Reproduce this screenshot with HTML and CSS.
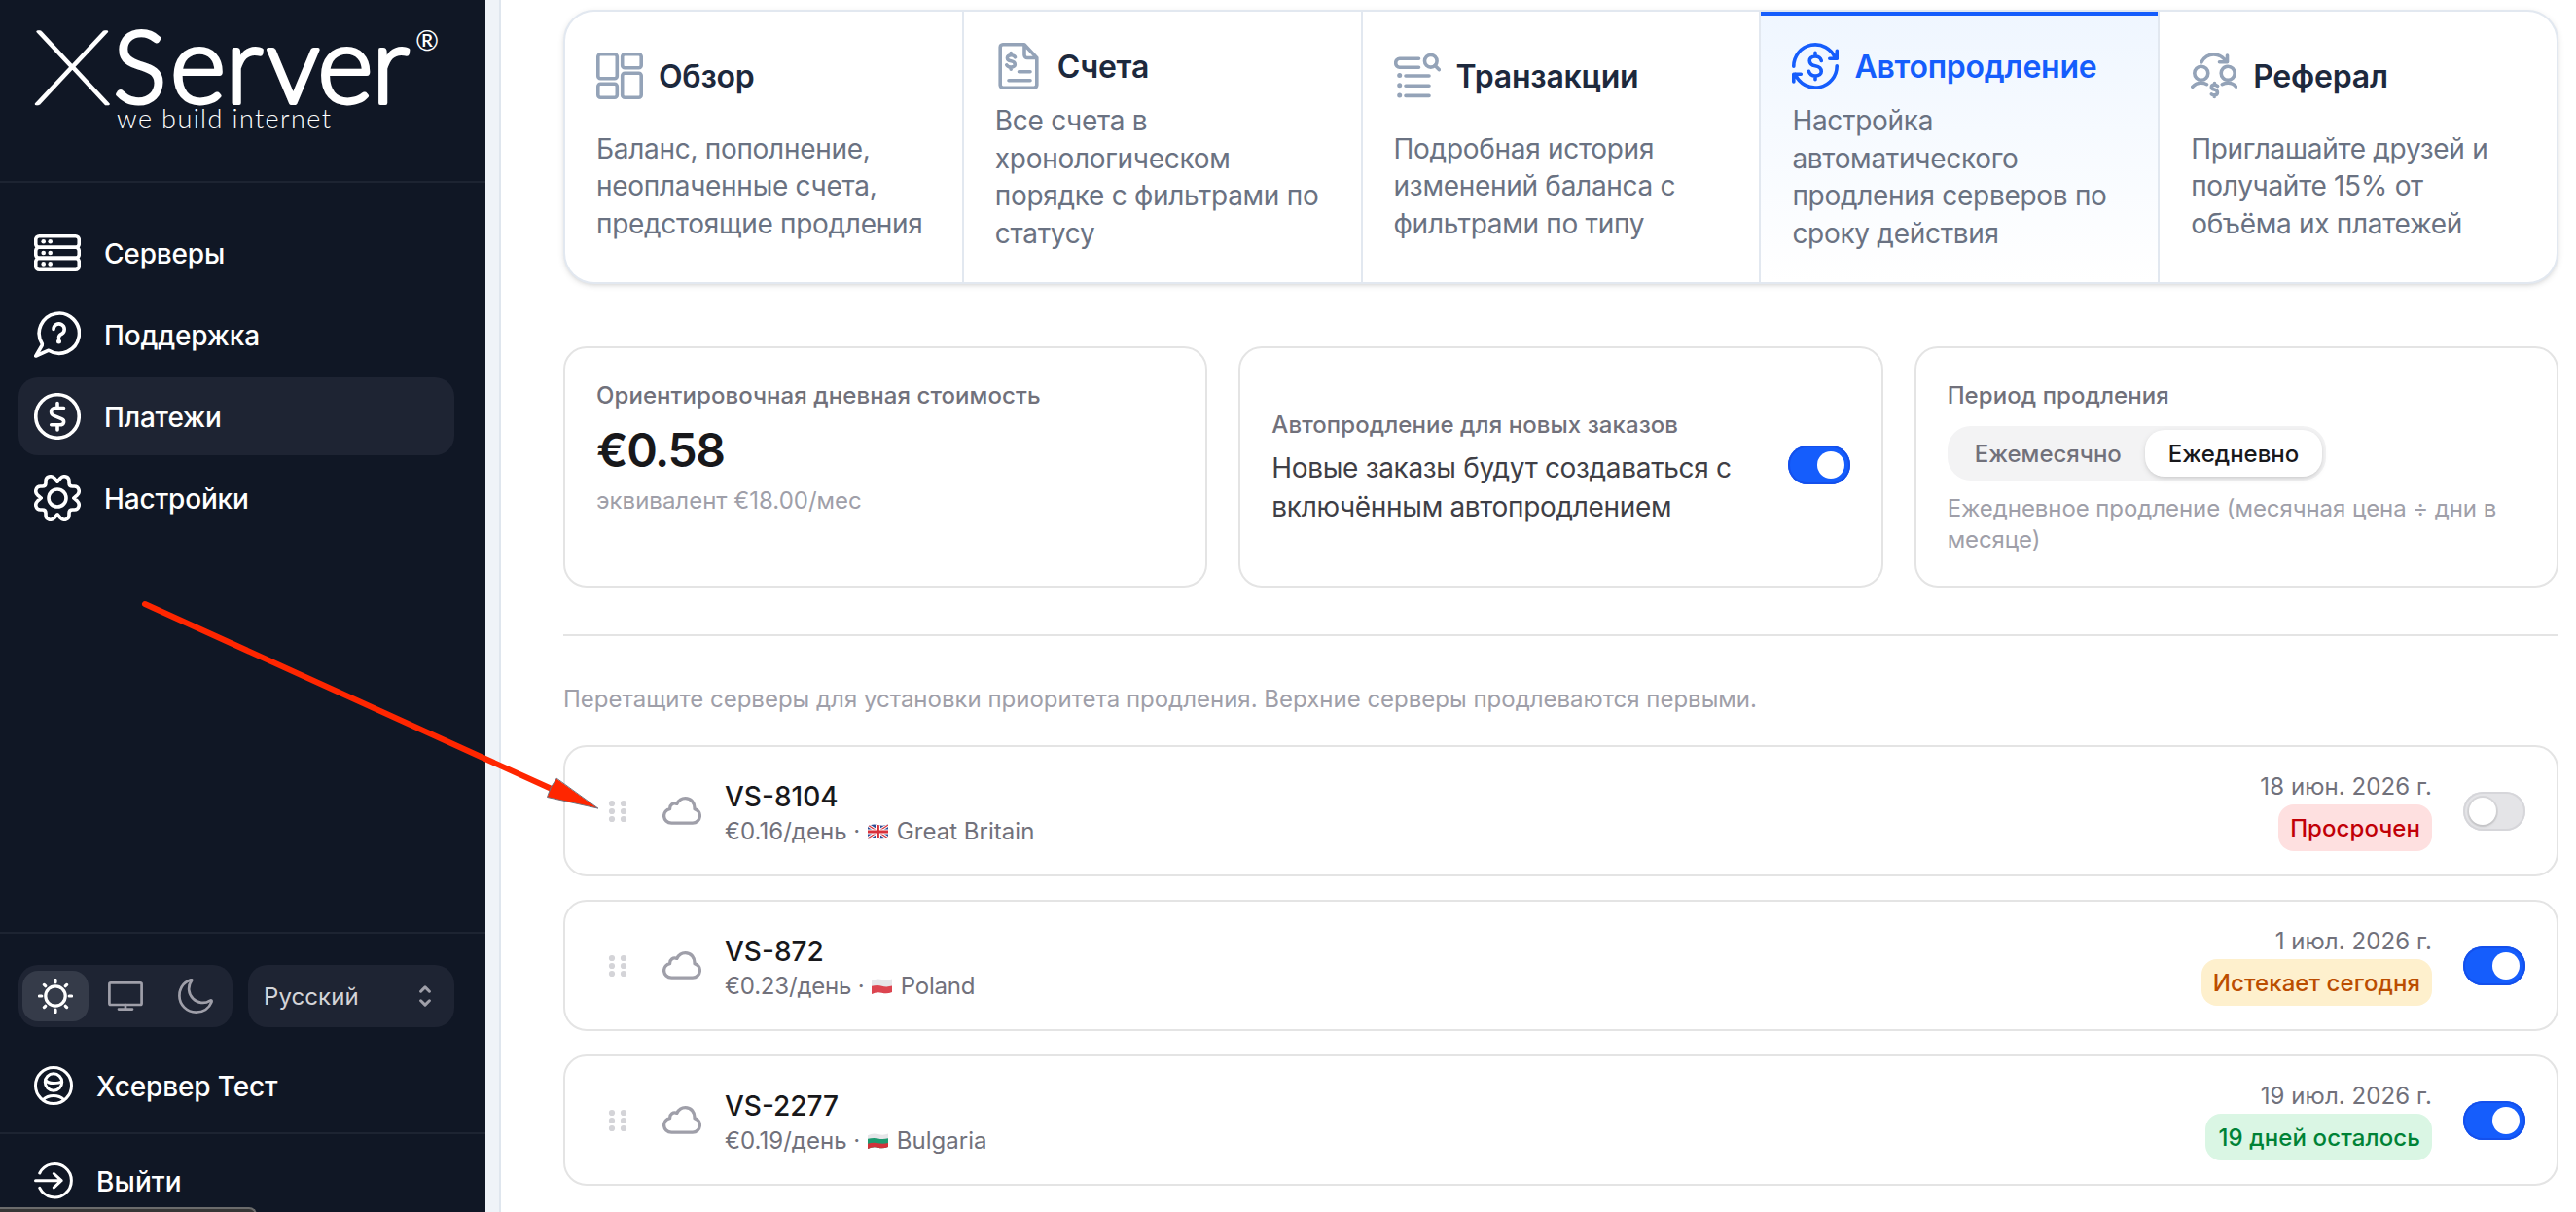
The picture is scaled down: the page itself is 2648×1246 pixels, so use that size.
FILE: index.html
```html
<!DOCTYPE html>
<html lang="ru">
<head>
<meta charset="utf-8">
<title>XServer — Автопродление</title>
<link rel="stylesheet" href="styles.css">
</head>
<body>
<svg class="defs" width="0" height="0" aria-hidden="true">
  <symbol id="cloud" viewBox="0 0 40 40"><path d="M9.3 32.1C5 32.1 1.6 28.8 1.6 24.8C1.6 21.2 4.2 18.3 7.6 17.6C7.4 13.3 11 10.8 14.8 12.4C16.6 8.8 20 6.7 23.5 6.7C29.5 6.7 33.3 11.5 33 17.6C36 18.6 38.4 21.4 38.4 24.8C38.4 28.9 35 32.1 31 32.1Z"/></symbol>
  <symbol id="grip" viewBox="0 0 20 24"><circle cx="4" cy="4" r="3.1"/><circle cx="16" cy="4" r="3.1"/><circle cx="4" cy="12" r="3.1"/><circle cx="16" cy="12" r="3.1"/><circle cx="4" cy="20" r="3.1"/><circle cx="16" cy="20" r="3.1"/></symbol>
  <clipPath id="wave"><path d="M2 2.2Q7 -.6 12.500 1T23 .6V14Q18 16 12.500 14.700T2 16Z"/></clipPath>
</svg>

<aside class="sidebar">
  <header class="brand">
    <svg class="logo" width="430" height="120" viewBox="0 0 430 120" role="img" aria-label="XServer">
      <text class="logo-x" transform="translate(12.500 86) scale(1.27 1)">X</text>
      <text class="logo-name" y="85"><tspan class="cap" x="95.500">S</tspan><tspan x="153.700 210.600 252.700 305.300 361">erver</tspan></text>
      <text class="logo-reg" x="406" y="31">®</text>
      <text class="logo-tag" x="99" y="111" textLength="220">we build internet</text>
    </svg>
  </header>

  <nav class="nav">
    <a class="nav-item">
      <svg class="icon48" viewBox="0 0 48 48"><rect x="1.750" y="6.700" width="44.500" height="11.600" rx="3.600"/><rect x="1.750" y="18.300" width="44.500" height="11.100" rx="3.600"/><rect x="1.750" y="29.400" width="44.500" height="11.900" rx="3.600"/><g class="fill"><circle cx="9.700" cy="12.300" r="2.300"/><circle cx="16.700" cy="12.300" r="2.300"/><circle cx="9.700" cy="24" r="2.300"/><circle cx="16.700" cy="24" r="2.300"/><circle cx="9.700" cy="35.400" r="2.300"/><circle cx="16.700" cy="35.400" r="2.300"/></g></svg>
      <span>Серверы</span>
    </a>
    <a class="nav-item">
      <svg class="icon48" viewBox="0 0 48 48"><path d="M15 40.200A20.600 20.600 0 1 0 8.300 33.500L8.200 35L1.800 46Z"/><path d="M20 18.500a5.600 5.600 0 1 1 8.600 4.700q-3 1.600-3.100 3.600"/><circle class="fill" cx="25.500" cy="31" r="2.500"/></svg>
      <span>Поддержка</span>
    </a>
    <a class="nav-item active">
      <svg class="icon48" viewBox="0 0 48 48"><circle cx="24" cy="24" r="22.250"/><path d="M30.500 15.500h-8.600c-5 0-5.600 6-2 7.600l8.400 3.500c3.600 1.600 3 6.200-2 6.200H17.700M24 10.500v5M24 33v5"/></svg>
      <span>Платежи</span>
    </a>
    <a class="nav-item">
      <svg class="icon48" viewBox="-24 -24 48 48"><path d="M0-16.800L3.200-20.500C6-23.500 12-22.500 12-17.500V-15.500Q12-12 15.500-12H17.500C22.500-12 23.500-6 20.500-3.200L16.800 0L20.500 3.200C23.500 6 22.500 12 17.500 12H15.500Q12 12 12 15.500V17.500C12 22.500 6 23.500 3.200 20.500L0 16.800L-3.200 20.500C-6 23.500-12 22.500-12 17.500V15.500Q-12 12-15.500 12H-17.500C-22.500 12-23.500 6-20.500 3.200L-16.800 0L-20.500-3.200C-23.500-6-22.500-12-17.500-12H-15.500Q-12-12-12-15.500V-17.500C-12-22.500-6-23.500-3.200-20.500Z"/><circle r="9"/></svg>
      <span>Настройки</span>
    </a>
  </nav>

  <footer class="side-foot">
    <div class="controls">
      <div class="themes">
        <span class="theme on"><svg width="36" height="36" viewBox="0 0 36 36"><circle cx="18" cy="18" r="10.200"/><path d="M18 1.500v2.300M18 32.200v2.300M1.500 18h2.300M32.200 18h2.300M6.400 6.400l1.300 1.300M28.300 28.300l1.300 1.300M6.400 29.600l1.300-1.300M28.300 7.700l1.300-1.300"/></svg></span>
        <span class="theme"><svg width="36" height="36" viewBox="0 0 36 36"><rect x="1.400" y="4.400" width="33.200" height="22.600" rx="1.500"/><path d="M18 27v4.500M11 31.600h14"/></svg></span>
        <span class="theme"><svg width="36" height="36" viewBox="0 0 36 36"><path d="M14 2.200C9.500 8 10.600 16 15.500 20.700C20 25.300 27.500 26.300 32.600 22.800C34.300 21.800 35 22.400 34.400 24.200C32 30.500 26 34.600 18.500 34.600C9 34.600 1.400 27 1.400 17.800C1.400 10.500 5.500 4.500 11.800 1.700C13.800 .900 14.800 1.200 14 2.200Z"/></svg></span>
      </div>
      <div class="lang">
        <span>Русский</span>
        <svg width="12" height="22" viewBox="0 0 12 22"><path d="M1.600 6.200L6 1.900l4.400 4.300M1.600 15.800L6 20.100l4.400-4.300"/></svg>
      </div>
    </div>
    <a class="foot-item user">
      <svg width="40" height="40" viewBox="0 0 40 40"><circle cx="20" cy="20" r="18.500"/><circle cx="20" cy="16.500" r="8.700"/><path d="M11.800 14.500Q14 17.500 20 17.500T28.400 16M9.300 34.600Q13.500 30.600 20 30.600T30.700 34.600"/></svg>
      <span>Хсервер Тест</span>
    </a>
    <a class="foot-item logout">
      <svg width="40" height="40" viewBox="0 0 40 40"><path d="M5.800 12A17.200 17.200 0 1 1 5.800 27.400M1.500 19.700H28M20.400 12.500l7.700 7.200-7.700 7.200"/></svg>
      <span>Выйти</span>
    </a>
  </footer>
  <div class="status"></div>
</aside>

<main class="main">
  <section class="tabs">
    <a class="tab">
      <div class="tab-head"><svg class="icon48" viewBox="0 0 48 48"><rect x="1.800" y="1.800" width="19.500" height="25" rx="2.500"/><rect x="26.700" y="1.800" width="19.500" height="14" rx="2.500"/><rect x="1.800" y="32.200" width="19.500" height="14" rx="2.500"/><rect x="26.700" y="21.200" width="19.500" height="25" rx="2.500"/></svg><h3>Обзор</h3></div>
      <p>Баланс, пополнение, неоплаченные счета, предстоящие продления</p>
    </a>
    <a class="tab">
      <div class="tab-head"><svg class="icon48" viewBox="0 0 48 48"><path d="M30 1.800H8A3 3 0 0 0 5.200 4.600V43.400A3 3 0 0 0 8 46.200H40A3 3 0 0 0 42.800 43.400V15.500ZM30 1.800V12.500A3 3 0 0 0 33 15.500H42.800"/><path d="M20.500 14.800q-1.200-2-4.200-2c-5.500 0-4.800 5.300 0 6c5.200.800 5.500 6.200 0 6.200q-3.200 0-4.500-2.200M16.200 10.500v2.300M16.200 25v2.300M24.500 29.800H36M14 38.700H36"/></svg><h3>Счета</h3></div>
      <p>Все счета в хронологическом порядке с фильтрами по статусу</p>
    </a>
    <a class="tab">
      <div class="tab-head"><svg class="icon48" viewBox="0 0 48 48"><path d="M25.500 6.300H6.200A4 4 0 0 0 1.800 10.700A4 4 0 0 0 6.200 15.200H25.500"/><circle cx="37.800" cy="8.800" r="6.300"/><path d="M42.200 13.400l4 4.200M12 24H36M12 34.200H36M12 44.400H36"/><g class="fill"><circle cx="5.700" cy="23.500" r="2.500"/><circle cx="5.700" cy="33.800" r="2.500"/><circle cx="5.700" cy="44" r="2.500"/></g></svg><h3>Транзакции</h3></div>
      <p>Подробная история изменений баланса с фильтрами по типу</p>
    </a>
    <a class="tab current">
      <div class="tab-head"><svg class="icon48" viewBox="0 0 48 48"><path d="M1.800 24.300A22.200 22.200 0 0 1 44.600 15.800M46.300 8.400V16.200H38.800M46.200 23.700A22.200 22.200 0 0 1 3.400 32.200M1.800 40V32.200H9.300"/><path d="M30.300 18.500q-1.300-4.500-6.300-4.500c-8 0-7.500 8.500 0 9.800c8.200 1.400 8.400 10.200 0 10.200q-5.300 0-6.600-4.700M24 10.300v3.700M24 34v3.700"/></svg><h3>Автопродление</h3></div>
      <p>Настройка автоматического продления серверов по сроку действия</p>
    </a>
    <a class="tab">
      <div class="tab-head"><svg class="icon48" viewBox="0 0 48 48"><circle cx="10.800" cy="21.300" r="7"/><circle cx="38.200" cy="21.300" r="7"/><path d="M1.800 35.200Q5.500 31.300 10.800 31.300Q14 31.300 16.500 32.700M32.300 32.700Q34.800 31.300 38.200 31.300Q43.500 31.300 46.500 35.200M11 9.800Q15.500 2 23.500 2Q31.500 2 36.200 9.200M37.500 3V9.700H29.500"/><path d="M27.600 34.500q-1.200-1.300-3.500-1.300c-3.600 0-3.800 4 0 4.900c4.600 1 4.200 5.700.200 5.700q-1.800 0-3-.900M24.500 31.500v1.500M24.300 44v1.500"/></svg><h3>Реферал</h3></div>
      <p>Приглашайте друзей и получайте 15% от объёма их платежей</p>
    </a>
  </section>

  <section class="stats">
    <div class="card">
      <div class="label">Ориентировочная дневная стоимость</div>
      <div class="price">€0.58</div>
      <div class="note">эквивалент €18.00/мес</div>
    </div>
    <div class="card split">
      <div>
        <div class="label">Автопродление для новых заказов</div>
        <div class="text">Новые заказы будут создаваться с включённым автопродлением</div>
      </div>
      <span class="toggle on"></span>
    </div>
    <div class="card period">
      <div class="label">Период продления</div>
      <div class="segment"><span>Ежемесячно</span><span class="picked">Ежедневно</span></div>
      <div class="hint">Ежедневное продление (месячная цена ÷ дни в месяце)</div>
    </div>
  </section>

  <hr class="rule">
  <p class="drag-hint">Перетащите серверы для установки приоритета продления. Верхние серверы продлеваются первыми.</p>

  <section class="servers">
    <article class="server">
      <span class="grip"><svg width="20" height="24"><use href="#grip"/></svg></span>
      <svg class="cloud"><use href="#cloud"/></svg>
      <div class="info">
        <div class="name">VS-8104</div>
        <div class="meta">€0.16/день · <svg class="flag" width="25" height="16" viewBox="0 0 25 16"><g clip-path="url(#wave)"><rect width="25" height="16" fill="#2f4c94"/><path d="M2 1L23 15M23 1L2 15" stroke="#fff" stroke-width="3.200"/><path d="M2 1L23 15M23 1L2 15" stroke="#d9363e" stroke-width="1.200"/><path d="M12.500 0V16M0 8H25" stroke="#fff" stroke-width="5"/><path d="M12.500 0V16M0 8H25" stroke="#d9303a" stroke-width="2.800"/></g></svg> Great Britain</div>
      </div>
      <div class="due"><span>18 июн. 2026 г.</span><b class="pill red">Просрочен</b></div>
      <span class="toggle"></span>
    </article>
    <article class="server">
      <span class="grip"><svg width="20" height="24"><use href="#grip"/></svg></span>
      <svg class="cloud"><use href="#cloud"/></svg>
      <div class="info">
        <div class="name">VS-872</div>
        <div class="meta tight">€0.23/день · <svg class="flag" width="25" height="16" viewBox="0 0 25 16"><g clip-path="url(#wave)"><rect width="25" height="16" fill="#e6e6e9"/><path d="M0 8.500Q7 6 12.500 7.700T25 7V16H0Z" fill="#dc4550"/></g></svg> Poland</div>
      </div>
      <div class="due"><span>1 июл. 2026 г.</span><b class="pill amber">Истекает сегодня</b></div>
      <span class="toggle on"></span>
    </article>
    <article class="server">
      <span class="grip"><svg width="20" height="24"><use href="#grip"/></svg></span>
      <svg class="cloud"><use href="#cloud"/></svg>
      <div class="info">
        <div class="name">VS-2277</div>
        <div class="meta">€0.19/день · <svg class="flag" width="25" height="16" viewBox="0 0 25 16"><g clip-path="url(#wave)"><rect width="25" height="16" fill="#e6e6e9"/><path d="M0 6.500Q7 4 12.500 5.400T25 4.800V16H0Z" fill="#1d9a70"/><path d="M0 11.500Q7 9 12.500 10.200T25 9.600V16H0Z" fill="#d2323a"/></g></svg> Bulgaria</div>
      </div>
      <div class="due"><span>19 июл. 2026 г.</span><b class="pill green">19 дней осталось</b></div>
      <span class="toggle on"></span>
    </article>
  </section>
</main>

<svg class="arrow" width="480" height="226" viewBox="0 0 480 226"><path d="M9 11L427 201" stroke="#ff2600" stroke-width="6" stroke-linecap="round"/><path d="M474.500 221L422.500 209.500L426 200L432 190.500Z" fill="#ff2600"/></svg>
</body>
</html>
```
FILE: styles.css
```css
* { box-sizing: border-box; }

body {
  margin: 0;
  width: 2648px;
  height: 1246px;
  overflow: hidden;
  position: relative;
  display: flex;
  align-items: flex-start;
  background: #eff3f8;
  font-family: Inter, "Noto Sans", sans-serif;
  font-size: 24px;
  line-height: 32px;
  letter-spacing: 0.003em;
  color: #71717b;
}

h3, p { margin: 0; }

.defs { position: absolute; }

svg {
  flex: none;
  fill: none;
  stroke: currentColor;
  stroke-linecap: round;
  stroke-linejoin: round;
}

.icon48 {
  width: 48px;
  height: 48px;
  stroke-width: 3.6;
}

.fill { fill: currentColor; stroke: none; }

/* Sidebar */
.sidebar {
  flex: none;
  width: 499px;
  height: 1254px;
  display: flex;
  flex-direction: column;
  position: relative;
  background: #101725;
  color: #fff;
}

.brand {
  height: 188px;
  padding: 21px 0 0 21px;
  border-bottom: 2px solid #1d2432;
}

.logo {
  display: block;
  overflow: visible;
  font-family: Lato, "Open Sans", sans-serif;
  font-weight: 300;
  letter-spacing: 0;
}

.logo text { fill: #fff; stroke: none; }
.logo .logo-x { font-size: 107px; font-weight: 100; stroke: #fff; stroke-width: 2.7px; }
.logo .logo-name { font-size: 110px; stroke: #fff; stroke-width: 3.8px; }
.logo .cap { font-size: 102px; stroke-width: 4px; }
.logo .logo-reg { font-size: 29px; font-weight: 400; }
.logo .logo-tag { font-size: 27px; }

.nav {
  flex: 1;
  display: flex;
  flex-direction: column;
  gap: 4px;
  padding: 32px 32px 0 19px;
}

.nav-item {
  height: 80px;
  padding: 0 16px;
  display: flex;
  align-items: center;
  gap: 24px;
  border-radius: 20px;
  font-size: 28px;
  font-weight: 500;
  letter-spacing: -0.006em;
}

.nav-item span,
.foot-item span,
.tab-head h3 { padding-top: 2px; }

.lang span { padding-top: 2px; }

.nav-item.active { background: #1e2433; }

.side-foot {
  border-top: 2px solid #1d2432;
  padding-top: 32px;
}

.controls {
  display: flex;
  gap: 16px;
  padding: 0 32px 0 19px;
}

.themes {
  width: 220px;
  height: 64px;
  padding: 6px 4px;
  display: flex;
  gap: 4px;
  border-radius: 20px;
  background: #1e2433;
}

.theme {
  flex: 1;
  display: flex;
  align-items: center;
  justify-content: center;
  border-radius: 16px;
  color: #9f9fa9;
  stroke-width: 2.7;
}

.theme.on { background: #353b49; color: #fff; stroke-width: 3.2; }

.lang {
  flex: 1;
  height: 64px;
  padding: 0 24px 0 16px;
  display: flex;
  align-items: center;
  justify-content: space-between;
  border-radius: 20px;
  background: #1e2433;
  color: #d4d4d8;
}

.lang svg { color: #9f9fa9; stroke-width: 3; }

.foot-item {
  height: 80px;
  padding-left: 35px;
  display: flex;
  align-items: center;
  gap: 24px;
  font-size: 28px;
  font-weight: 500;
  letter-spacing: -0.005em;
  stroke-width: 3;
}

.user { margin: 20px 0 8px; }

.logout {
  height: 90px;
  padding-top: 8px;
  border-top: 2px solid #1d2432;
}

.logout span { letter-spacing: 0.004em; }

/* Browser link preview peeking in at the bottom edge */
.status {
  position: absolute;
  left: 0;
  top: 1241px;
  width: 264px;
  height: 13px;
  border-top: 2px solid #6b6b6b;
  border-right: 2px solid #6b6b6b;
  border-top-right-radius: 8px;
  background: #363636;
}

/* Main panel */
.main {
  flex: 1;
  min-width: 0;
  height: 1246px;
  margin-left: 14px;
  padding: 10px 18px 0 64px;
  border-left: 2px solid #dfe6ee;
  background: #fff;
}

.tabs {
  height: 282px;
  display: grid;
  grid-template-columns: repeat(5, 1fr);
  gap: 2px;
  border: 2px solid #e2e8f0;
  border-radius: 32px;
  overflow: hidden;
  background: #e2e8f0;
  box-shadow: 0 2px 6px rgba(0, 0, 0, 0.1), 0 2px 4px -2px rgba(0, 0, 0, 0.1);
}

.tab {
  min-width: 0;
  padding: 32px;
  display: flex;
  flex-direction: column;
  justify-content: space-around;
  gap: 12px;
  background: #fff;
}

.tab-head {
  display: flex;
  align-items: center;
  gap: 16px;
  color: #94a3b8;
}

.tab h3 {
  font-size: 32px;
  line-height: 40px;
  font-weight: 600;
  letter-spacing: -0.007em;
  color: #1d293d;
}

.tab p {
  padding-top: 1px;
  margin-bottom: -1px;
  font-size: 28px;
  line-height: 38.5px;
  letter-spacing: -0.0105em;
  color: #6a7282;
}

.tab.current {
  background: linear-gradient(#eff6ff, #fff);
  box-shadow: inset 0 4px 0 #155dfc;
}

.tab.current .tab-head,
.tab.current h3 { color: #155dfc; }

.stats {
  margin-top: 64px;
  display: grid;
  grid-template-columns: repeat(3, 1fr);
  gap: 32px;
}

.card {
  height: 248px;
  padding: 33px 32px 31px;
  border: 2px solid #e4e4e4;
  border-radius: 24px;
}

.card.split {
  display: flex;
  align-items: center;
  justify-content: space-between;
  gap: 32px;
}

.card.split .toggle { margin-bottom: 6px; }

.label { font-weight: 500; }

.price {
  margin-top: 8px;
  font-size: 48px;
  line-height: 64px;
  font-weight: 600;
  letter-spacing: -0.03em;
  color: #18181b;
}

.note { margin-top: 4px; color: #9f9fa9; letter-spacing: 0; }

.text {
  margin-top: 8px;
  font-size: 28px;
  line-height: 40px;
  letter-spacing: -0.0115em;
  color: #3f3f46;
}

.segment {
  width: fit-content;
  margin-top: 15px;
  padding: 4px;
  display: flex;
  border-radius: 24px;
  background: #f3f3f4;
  font-weight: 500;
  letter-spacing: 0;
}

.segment span { padding: 9px 24px 7px; border-radius: 20px; }

.segment .picked {
  background: #fff;
  color: #18181b;
  box-shadow: 0 2px 6px rgba(0, 0, 0, 0.1), 0 2px 4px -2px rgba(0, 0, 0, 0.14);
}

.hint { margin-top: 13px; color: #9f9fa9; letter-spacing: -0.003em; }

.toggle {
  flex: none;
  width: 64px;
  height: 40px;
  padding: 6px;
  display: flex;
  border-radius: 20px;
  background: #e4e4e7;
  box-shadow: inset 0 0 0 2px #d6d6da;
}

.toggle::before {
  content: "";
  width: 28px;
  height: 28px;
  border-radius: 50%;
  background: #fff;
  box-shadow: 0 0 0 2px rgba(0, 0, 0, 0.06), 0 2px 3px rgba(0, 0, 0, 0.1);
}

.toggle.on {
  justify-content: flex-end;
  background: #155dfc;
  box-shadow: inset 0 0 0 2px #1450ec;
}

.toggle.on::before { box-shadow: none; }

.rule {
  margin: 48px 0;
  height: 2px;
  border: 0;
  background: #e4e4e4;
}

.drag-hint { padding-top: 1px; color: #9f9fa9; letter-spacing: 0; }

.servers {
  margin-top: 31px;
  display: flex;
  flex-direction: column;
  gap: 24px;
}

.server {
  height: 135px;
  padding: 0 32px;
  display: flex;
  align-items: center;
  border: 2px solid #e4e4e4;
  border-radius: 24px;
}

.grip {
  width: 44px;
  margin-right: 24px;
  display: flex;
  justify-content: center;
  color: #d4d4d8;
}

.grip svg { fill: currentColor; stroke: none; }

.cloud {
  width: 40px;
  height: 40px;
  margin-right: 24px;
  color: #9f9fa9;
  stroke-width: 3.3;
}

.info { flex: 1; padding-top: 2px; }

.name {
  font-size: 28px;
  line-height: 40px;
  font-weight: 500;
  letter-spacing: 0;
  color: #18181b;
}

.meta { letter-spacing: 0.001em; }
.meta.tight { letter-spacing: -0.008em; }

.flag { margin-left: -1px; stroke: none; vertical-align: 0; }

.due {
  margin-right: 32px;
  display: flex;
  flex-direction: column;
  align-items: flex-end;
  gap: 2px;
  padding-top: 1px;
}

.pill {
  padding: 9px 12px 7px;
  border-radius: 16px;
  font-weight: 500;
}

.red { background: #fee0e0; color: #c10007; }
.amber { background: #fef0cd; color: #bb4d00; }
.green { padding-left: 13px; background: #daf6e4; color: #008236; letter-spacing: 0.005em; }

/* Pointer drawn over the page */
.arrow {
  position: absolute;
  left: 140px;
  top: 610px;
}
```
